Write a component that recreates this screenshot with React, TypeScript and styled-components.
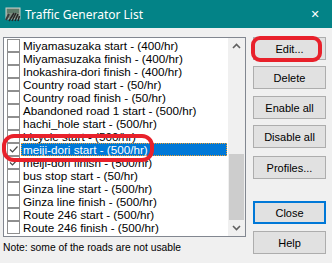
import React from 'react'
import styled, { createGlobalStyle } from 'styled-components'

const items: { label: string; checked?: boolean; selected?: boolean }[] = [
  { label: 'Miyamasuzaka start - (400/hr)' },
  { label: 'Miyamasuzaka finish - (400/hr)' },
  { label: 'Inokashira-dori finish - (400/hr)' },
  { label: 'Country road start - (50/hr)' },
  { label: 'Country road finish - (50/hr)' },
  { label: 'Abandoned road 1 start - (500/hr)' },
  { label: 'hachi_hole start - (500/hr)' },
  { label: 'bicycle start - (500/hr)' },
  { label: 'meiji-dori start - (500/hr)', checked: true, selected: true },
  { label: 'meiji-dori finish - (500/hr)', checked: true },
  { label: 'bus stop start - (50/hr)' },
  { label: 'Ginza line start - (500/hr)' },
  { label: 'Ginza line finish - (500/hr)' },
  { label: 'Route 246 start - (500/hr)' },
  { label: 'Route 246 finish - (500/hr)' },
]

const buttons: { label: string; gap: number; isDefault?: boolean }[] = [
  { label: 'Edit...', gap: 0 },
  { label: 'Delete', gap: 6 },
  { label: 'Enable all', gap: 7 },
  { label: 'Disable all', gap: 6 },
  { label: 'Profiles...', gap: 8 },
  { label: 'Close', gap: 22, isDefault: true },
  { label: 'Help', gap: 7 },
]

export default function App() {
  return (
    <>
      <GlobalStyle />
      <Window>
        <TitleBar>
          <TitleIcon />
          <TitleText>Traffic Generator List</TitleText>
          <CloseX>✕</CloseX>
        </TitleBar>
        <Body>
          <LeftColumn>
            <ListBox>
              <Rows>
                {items.map((it) => (
                  <Row key={it.label}>
                    <CheckBox>{it.checked && <CheckMark />}</CheckBox>
                    <RowLabel $selected={it.selected}>{it.label}</RowLabel>
                  </Row>
                ))}
              </Rows>
              <ScrollBar>
                <ArrowCell>
                  <Chevron up />
                </ArrowCell>
                <Track>
                  <Thumb $top={99} $height={66} />
                </Track>
                <ArrowCell>
                  <Chevron />
                </ArrowCell>
              </ScrollBar>
            </ListBox>
            <Note>Note: some of the roads are not usable</Note>
          </LeftColumn>
          <ButtonColumn>
            {buttons.map((b) => (
              <Button key={b.label} $gap={b.gap} $isDefault={b.isDefault}>
                {b.label}
              </Button>
            ))}
          </ButtonColumn>
        </Body>
        <RedMark $x={251} $y={36} $w={71} $h={26} $r={9} />
        <RedMark $x={2} $y={134} $w={152} $h={28} $r={12} />
      </Window>
    </>
  )
}

// small road picture used as the window icon
const TitleIcon = () => (
  <svg width="16" height="16" viewBox="0 0 16 16" style={{ marginRight: 4 }}>
    <rect x="1" y="2" width="14" height="11" fill="#7d8e80" stroke="#c9d0c9" />
    <rect x="2" y="3" width="12" height="4" fill="#5f7d6c" />
    <path d="M4 15 L9 7 M7 15 L11 7 M10 15 L13 8 M13 15 L14.5 10" stroke="#262626" strokeWidth="1.5" />
    <path d="M1 14 L4 8" stroke="#3a3a3a" strokeWidth="2" />
  </svg>
)

const CheckMark = () => (
  <svg width="11" height="11" viewBox="0 0 11 11">
    <path d="M2 5.5 L4.5 8 L9.5 2.5" stroke="#4a4a4a" strokeWidth="1.2" fill="none" />
  </svg>
)

const Chevron = ({ up }: { up?: boolean }) => (
  <svg width="9" height="6" viewBox="0 0 9 6">
    <path
      d={up ? 'M1 5 L4.5 1.5 L8 5' : 'M1 1 L4.5 4.5 L8 1'}
      stroke="#606060"
      strokeWidth="1.6"
      fill="none"
    />
  </svg>
)

const GlobalStyle = createGlobalStyle`
  html, body {
    margin: 0;
    padding: 0;
    background: #f0f0f0;
  }
`

const Window = styled.div`
  position: relative;
  width: 332px;
  height: 263px;
  background: #f0f0f0;
  overflow: hidden;
  font-family: 'Liberation Sans', Arial, sans-serif;
`

const TitleBar = styled.div`
  display: flex;
  align-items: center;
  height: 28px;
  padding-left: 5px;
  background: #038387;
  color: #ffffff;
`

const TitleText = styled.div`
  flex: 1;
  font-family: 'Noto Sans', 'Open Sans', sans-serif;
  font-size: 12px;
`

const CloseX = styled.div`
  width: 30px;
  margin-right: 2px;
  text-align: center;
  font-family: 'DejaVu Sans', sans-serif;
  font-size: 11px;
`

const Body = styled.div`
  display: flex;
  padding: 9px 0 0 3px;
`

const LeftColumn = styled.div`
  display: flex;
  flex-direction: column;
`

const ListBox = styled.div`
  display: flex;
  width: 241px;
  height: 198px;
  border: 1px solid #828790;
  background: #ffffff;
  overflow: hidden;
`

const Rows = styled.div`
  flex: 1;
  min-width: 0;
  padding: 1px 0 0 3px;
`

const Row = styled.div`
  display: flex;
  align-items: center;
  height: 13px;
  font-size: 11.7px;
  color: #000000;
`

const CheckBox = styled.div`
  display: flex;
  align-items: center;
  justify-content: center;
  box-sizing: border-box;
  flex: none;
  width: 13px;
  height: 13px;
  border: 1px solid #8f8f8f;
  background: #ffffff;
  margin-right: 1px;
`

const RowLabel = styled.div<{ $selected?: boolean }>`
  display: flex;
  align-items: center;
  height: 13px;
  box-sizing: border-box;
  padding-left: 2px;
  flex: 1;
  margin-right: 1px;
  white-space: nowrap;
  overflow: hidden;
  ${({ $selected }) =>
    $selected &&
    `
    background: #0078d7;
    color: #ffffff;
    outline: 1px dotted #f0a030;
    outline-offset: -1px;
  `}
`

const ScrollBar = styled.div`
  display: flex;
  flex-direction: column;
  flex: none;
  width: 17px;
  background: #f0f0f0;
`

const ArrowCell = styled.div`
  display: flex;
  align-items: center;
  justify-content: center;
  height: 17px;
`

const Track = styled.div`
  flex: 1;
`

const Thumb = styled.div<{ $top: number; $height: number }>`
  margin: ${({ $top }) => $top}px 1px 0 1px;
  height: ${({ $height }) => $height}px;
  background: #cdcdcd;
`

const Note = styled.div`
  margin-top: 5px;
  font-size: 10.3px;
  color: #000000;
  white-space: nowrap;
`

const ButtonColumn = styled.div`
  display: flex;
  flex-direction: column;
  margin-left: 7px;
`

const Button = styled.div<{ $gap: number; $isDefault?: boolean }>`
  display: flex;
  align-items: center;
  justify-content: center;
  box-sizing: border-box;
  width: 73px;
  height: 23px;
  margin-top: ${({ $gap }) => $gap}px;
  background: #e1e1e1;
  border: ${({ $isDefault }) => ($isDefault ? '2px solid #0078d7' : '1px solid #adadad')};
  font-size: 11px;
  color: #000000;
`

const RedMark = styled.div<{ $x: number; $y: number; $w: number; $h: number; $r: number }>`
  position: absolute;
  left: ${({ $x }) => $x}px;
  top: ${({ $y }) => $y}px;
  width: ${({ $w }) => $w}px;
  height: ${({ $h }) => $h}px;
  box-sizing: border-box;
  border: 4px solid #e8212b;
  border-radius: ${({ $r }) => $r}px;
`
